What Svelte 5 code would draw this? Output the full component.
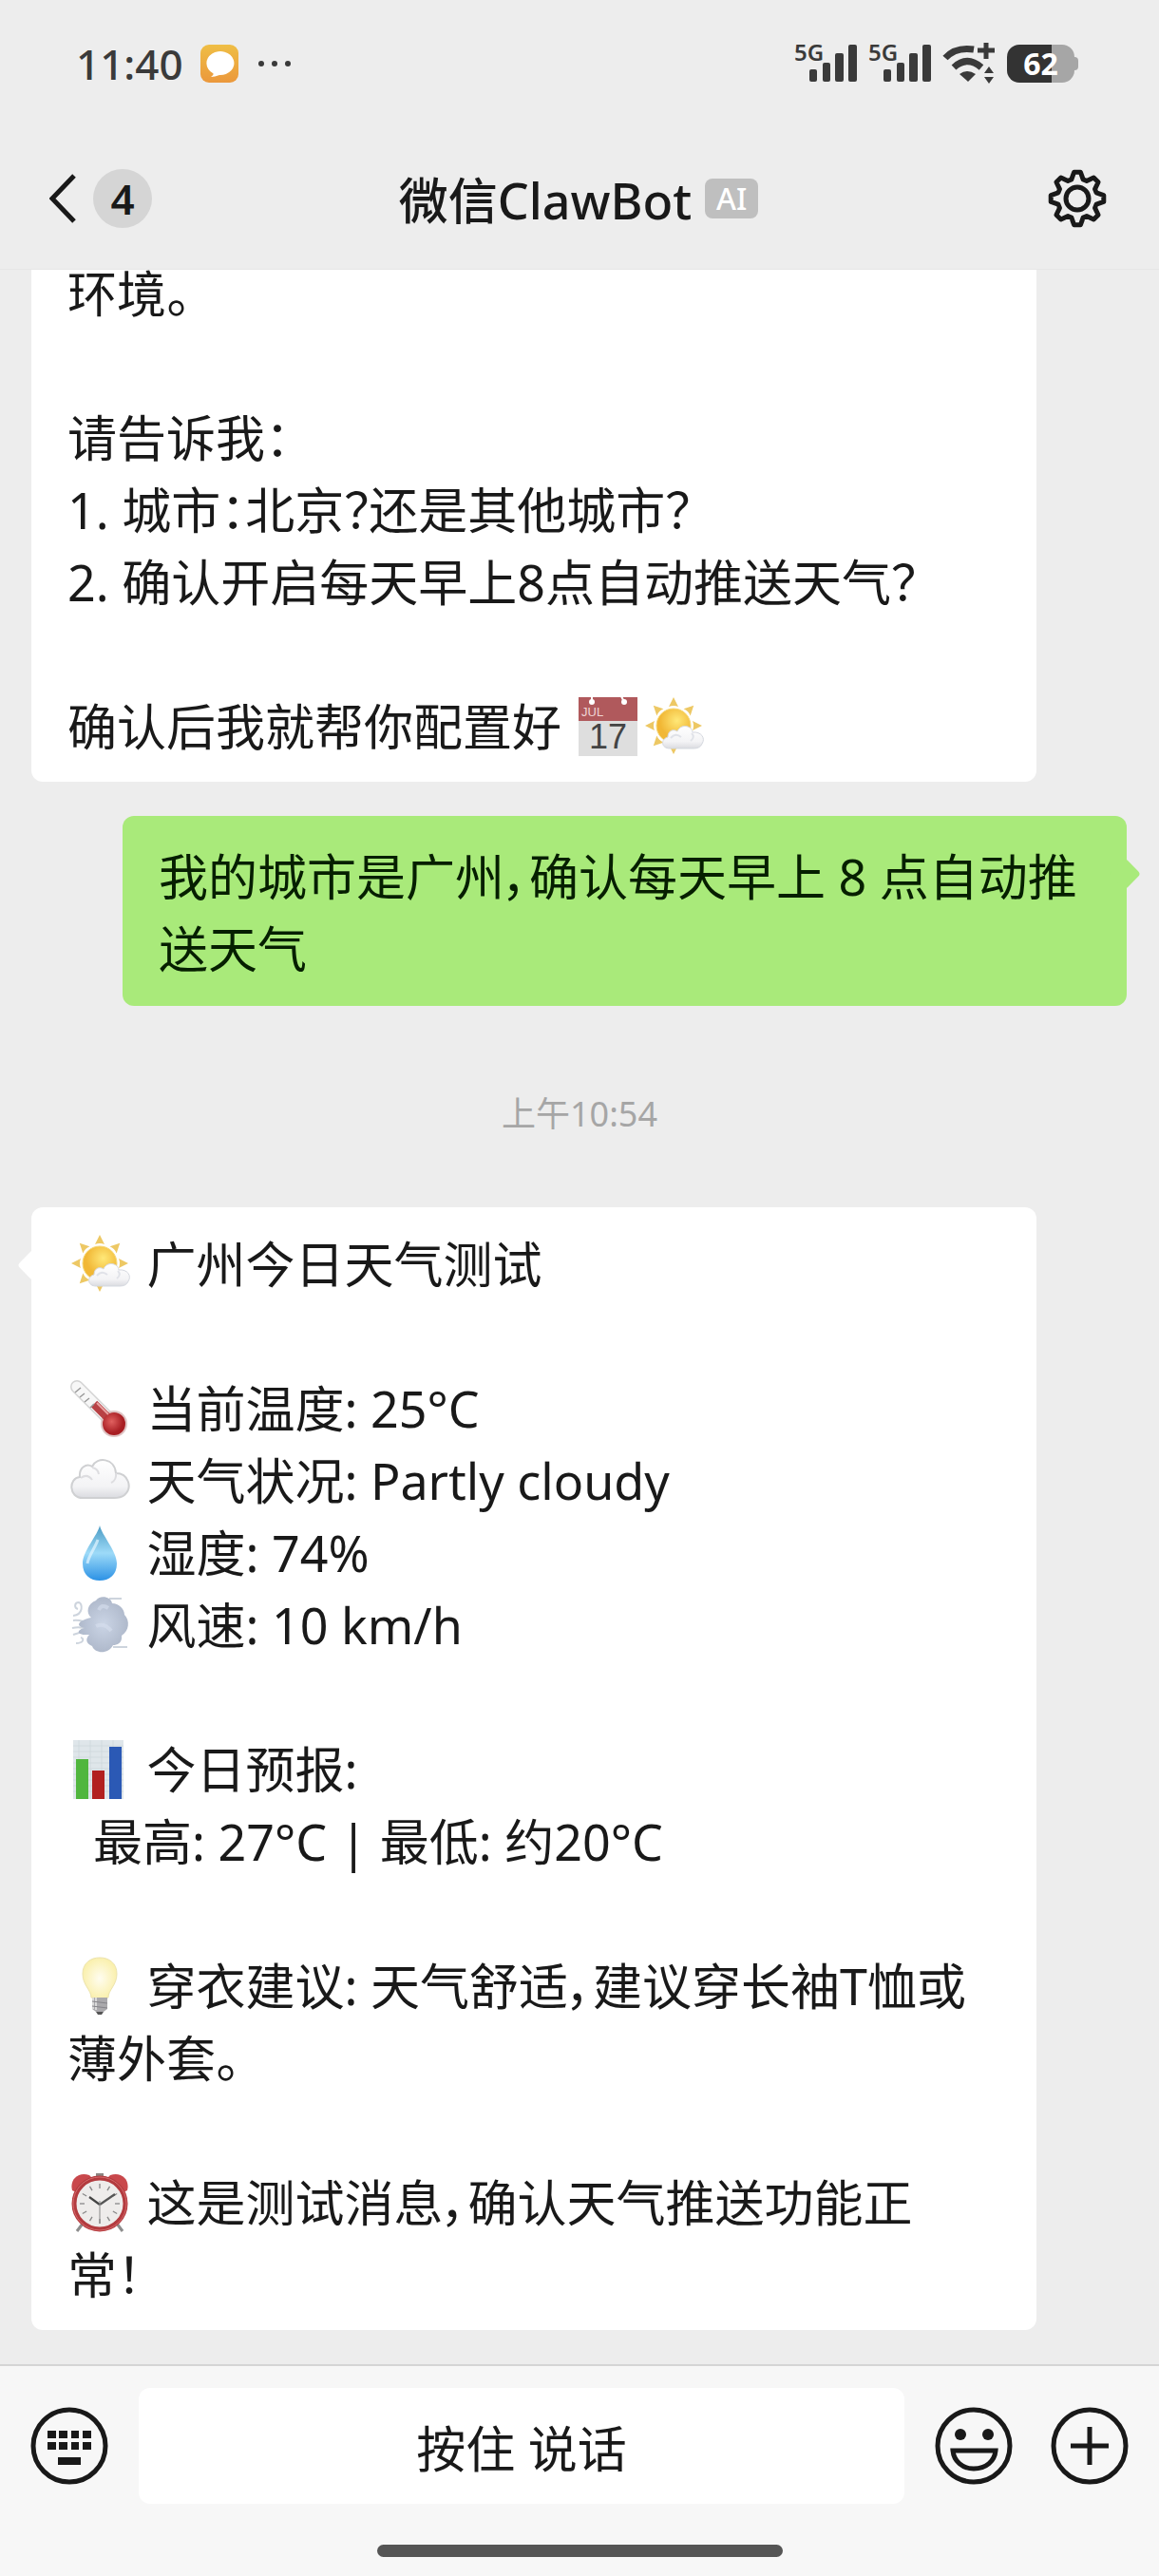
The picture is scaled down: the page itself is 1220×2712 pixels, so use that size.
<script lang="ts">
	type Message = { from: 'bot' | 'me'; text: string };

	const icons: Record<string, string> = {
		'📅': 'calendar',
		'⛅': 'partly cloudy',
		'🌡': 'thermometer',
		'☁': 'cloud',
		'💧': 'droplet',
		'💨': 'wind',
		'📊': 'chart',
		'💡': 'bulb',
		'⏰': 'alarm'
	};

	const earlier: Message[] = [
		{
			from: 'bot',
			text: '环境。\n\n请告诉我：\n1. 城市：北京？还是其他城市？\n2. 确认开启每天早上8点自动推送天气？\n\n确认后我就帮你配置好 📅⛅'
		},
		{ from: 'me', text: '我的城市是广州，确认每天早上 8 点自动推送天气' }
	];

	const latest: Message[] = [
		{
			from: 'bot',
			text: '⛅ 广州今日天气测试\n\n🌡 当前温度: 25°C\n☁ 天气状况: Partly cloudy\n💧 湿度: 74%\n💨 风速: 10 km/h\n\n📊 今日预报:\n  最高: 27°C | 最低: 约20°C\n\n💡 穿衣建议: 天气舒适，建议穿长袖T恤或薄外套。\n\n⏰ 这是测试消息，确认天气推送功能正\n常！'
		}
	];

	function split(text: string) {
		return text.split(/(📅|⛅|🌡|☁|💧|💨|📊|💡|⏰)/u).filter(Boolean);
	}

	function polar(deg: number, r: number) {
		const a = (deg * Math.PI) / 180;
		return `${(32 + r * Math.sin(a)).toFixed(2)} ${(32 - r * Math.cos(a)).toFixed(2)}`;
	}

	// eight teeth, four points each
	const gear = Array.from({ length: 8 }, (_, i) => i * 45)
		.flatMap((t) => [polar(t - 17, 21), polar(t - 7, 28), polar(t + 7, 28), polar(t + 17, 21)])
		.join('L');

	const rays = [0, 45, 90, 135, 180, 225, 270, 315];
	const ticks = Array.from({ length: 12 }, (_, i) => i * 30);
</script>

{#snippet emoji(name: string)}
	<svg class="emoji" viewBox="0 0 64 64" role="img" aria-label={name}>
		{#if name === 'calendar'}
			<rect x="1" y="1" width="62" height="62" fill="#dedede" />
			<rect x="1" y="1" width="62" height="25" fill="#b0595c" />
			<circle cx="15" cy="6" r="3" fill="#fff" />
			<circle cx="49" cy="6" r="3" fill="#fff" />
			<path d="M15 0v6M46 0l3 6" stroke="#fff" stroke-width="2" />
			<text x="4" y="21" font-size="13" fill="#efd5d5">JUL</text>
			<text x="32" y="55" font-size="36" text-anchor="middle" fill="#444">17</text>
		{:else if name === 'partly cloudy'}
			{#each rays as r}
				<path d="M26 11L31 1L36 11Q31 9 26 11Z" fill="#edc864" transform="rotate({r} 31 31)" />
			{/each}
			<circle cx="31" cy="31" r="18" fill="url(#sun)" stroke="#f6d878" />
			<path
				d="M27 55C18 55 17 45 25 43C25 36 31 34 35 37C38 29 50 30 51 38C60 37 65 44 61 50Q59 55 52 55Z"
				fill="url(#cloud)"
				stroke="#d5d8df"
			/>
			<path d="M28 44Q33 38 39 43M50 39Q54 43 49 47" fill="none" stroke="#e0e2e8" stroke-width="2" />
		{:else if name === 'thermometer'}
			<path d="M7 9L41 43" stroke="#d3d3d3" stroke-width="14" stroke-linecap="round" />
			<path d="M7 9L41 43" stroke="#f7f7f7" stroke-width="11" stroke-linecap="round" />
			<circle cx="46" cy="48" r="14" fill="#dec4c4" />
			<path d="M25 27L45 47" stroke="#b84145" stroke-width="9" />
			<circle cx="46" cy="48" r="12" fill="url(#mercury)" />
			<path d="M5 15l6-5M10 20l5-4M15 25l5-4M21 31l4-4" stroke="#999" stroke-width="1.5" />
			<path d="M28 26L40 38" stroke="#e9a1a1" stroke-width="2" />
		{:else if name === 'cloud'}
			<path
				d="M13 50C-2 50-2 29 10 28C9 18 17 13 23 17C28 6 47 8 48 24C61 24 66 39 57 47Q53 50 46 50Z"
				fill="url(#cloud)"
				stroke="#cfd0d2"
				stroke-width="2"
			/>
			<path
				d="M11 29Q18 24 23 31M23 18Q29 19 30 25M48 24Q49 31 43 34"
				fill="none"
				stroke="#dddde0"
				stroke-width="2"
			/>
		{:else if name === 'droplet'}
			<path d="M31 3C33 13 49 30 49 43C49 55 41 61 31 61C21 61 13 55 13 43C13 30 29 13 31 3Z" fill="url(#water)" />
			<path d="M29 18C26 27 19 35 18 43" fill="none" stroke="#e2f5ff" stroke-width="3" opacity=".7" />
		{:else if name === 'wind'}
			<path
				d="M3 22C14 21 13 9 9 8C4 8 4 14 8 15M3 27Q13 26 20 32M2 35Q10 33 18 36M3 42Q13 38 21 40M6 51C14 51 15 46 11 45M41 4H54M45 55H60"
				fill="none"
				stroke="#cdd4dd"
				stroke-width="2"
			/>
			<path
				d="M22 24C16 19 18 9 27 6C30 0 43 1 44 9C51 9 57 15 57 21C63 27 62 38 54 43C55 51 49 53 45 53C40 63 26 62 23 54C16 51 16 46 20 42C6 43 6 37 15 35C5 33 8 27 22 24Z"
				fill="url(#gust)"
			/>
			<path d="M30 16Q33 9 40 14M27 33Q36 29 43 38" fill="none" stroke="#d7e0ef" stroke-width="4" opacity=".6" />
		{:else if name === 'chart'}
			<rect x="3" y="1" width="53" height="62" fill="#dfe6ea" />
			<path
				d="M3 7H56M3 13H56M3 19H56M3 25H56M3 31H56M3 37H56M3 43H56M3 49H56M3 55H56M9 1V63M21 1V63M33 1V63M45 1V63"
				stroke="#cbd4da"
				stroke-width=".7"
			/>
			<rect x="6" y="21" width="13" height="42" fill="#50b63e" />
			<rect x="23" y="33" width="13" height="30" fill="#b2201f" />
			<rect x="41" y="8" width="13" height="55" fill="#2b59b5" />
		{:else if name === 'bulb'}
			<path
				d="M22 44C22 36 13 31 13 19C13 8 21 2 31 2C41 2 49 8 49 19C49 31 40 36 40 44Q31 47 22 44Z"
				fill="url(#glow)"
				stroke="#ece3ad"
			/>
			<path d="M23 44H39V56L35 59H27L23 56Z" fill="#aaa9ac" />
			<path d="M24 44v12M27 44v13" stroke="#dadada" stroke-width="2" />
			<path d="M23 48l16 2M23 53l16 2" stroke="#858489" />
			<path d="M27 59h8l-2 3h-4Z" fill="#555" />
		{:else if name === 'alarm'}
			<path d="M13 54L7 62M49 54L55 62" stroke="#8d8d8d" stroke-width="3" />
			<rect x="27" y="1" width="8" height="3" fill="#8c8582" />
			<path d="M2 19C-1 8 8-1 20 3L24 7L6 21Z" fill="#c9484c" />
			<path d="M60 19C63 8 54-1 42 3L38 7L56 21Z" fill="#c9484c" />
			<circle cx="31" cy="33" r="27" fill="#eeeceb" stroke="#b33b3f" stroke-width="5" />
			<circle cx="31" cy="33" r="28" fill="none" stroke="#d5686a" />
			{#each ticks as t}
				<path d="M31 12v5" stroke="#888" stroke-width="1.3" transform="rotate({t} 31 33)" />
			{/each}
			<path d="M31 34L47 23" stroke="#555" stroke-width="2.2" />
			<path d="M31 34L20 26" stroke="#444" stroke-width="2.2" />
			<path d="M31 30V54" stroke="#888" />
		{/if}
	</svg>
{/snippet}

{#snippet bubble(message: Message)}
	<p class="bubble {message.from}">{#each split(message.text) as part}{#if icons[part]}{@render emoji(icons[part])}{:else}{part}{/if}{/each}</p>
{/snippet}

{#snippet signal()}
	<div class="signal">
		<span>5G</span>
		<svg viewBox="0 0 50 40" aria-hidden="true">
			<rect x="0" y="26" width="8" height="13" rx="2" />
			<rect x="14" y="19" width="8" height="20" rx="2" />
			<rect x="27" y="9" width="9" height="30" rx="2" />
			<rect x="41" y="0" width="9" height="39" rx="2" />
		</svg>
	</div>
{/snippet}

<svg class="defs" aria-hidden="true">
	<defs>
		<linearGradient id="orange" x2="0" y2="1">
			<stop stop-color="#efbe45" />
			<stop offset="1" stop-color="#eb983c" />
		</linearGradient>
		<radialGradient id="sun" cx=".6" cy=".35">
			<stop stop-color="#ffe878" />
			<stop offset="1" stop-color="#f1b735" />
		</radialGradient>
		<linearGradient id="cloud" x2="0" y2="1">
			<stop stop-color="#fff" />
			<stop offset=".7" stop-color="#f3f3f5" />
			<stop offset="1" stop-color="#dadbe0" />
		</linearGradient>
		<radialGradient id="mercury" cx=".4" cy=".4">
			<stop stop-color="#e0605f" />
			<stop offset="1" stop-color="#a81e23" />
		</radialGradient>
		<linearGradient id="water" x2="0" y2="1">
			<stop stop-color="#4a9bc4" />
			<stop offset=".5" stop-color="#9ddaf8" />
			<stop offset="1" stop-color="#2c92e5" />
		</linearGradient>
		<radialGradient id="gust">
			<stop stop-color="#cbd5e6" />
			<stop offset="1" stop-color="#afb9cb" />
		</radialGradient>
		<radialGradient id="glow">
			<stop stop-color="#fffdf0" />
			<stop offset="1" stop-color="#faf0ae" />
		</radialGradient>
	</defs>
</svg>

<div class="phone">
	<header>
		<div class="status">
			<time>11:40</time>
			<svg class="app-icon" viewBox="0 0 40 40" aria-hidden="true">
				<rect width="40" height="40" rx="9" fill="url(#orange)" />
				<path d="M11 34Q15 31 13 30A14.5 12.5 0 1 1 20 32Q15 34 11 34Z" fill="#fff" />
			</svg>
			<svg class="more" viewBox="0 0 36 8" aria-hidden="true">
				<circle cx="4" cy="4" r="3" /><circle cx="18" cy="4" r="3" /><circle cx="32" cy="4" r="3" />
			</svg>
			<div class="system">
				{@render signal()}
				{@render signal()}
				<svg class="wifi" viewBox="0 0 56 44" aria-hidden="true">
					<path d="M3 16Q14 4 33 7" fill="none" stroke="#3a3a3a" stroke-width="7" />
					<path d="M12 26Q26 13 41 26" fill="none" stroke="#3a3a3a" stroke-width="7" />
					<path d="M18 33Q26 27 35 33L27 41Z" />
					<path d="M46 0V17M37 8H55" stroke="#3a3a3a" stroke-width="5" />
					<path d="M44 32L49 25L54 32ZM44 36L49 43L54 36Z" />
				</svg>
				<div class="battery"><span>62</span></div>
			</div>
		</div>
		<nav>
			<button class="back" aria-label="返回">
				<svg viewBox="0 0 28 52" aria-hidden="true"><path d="M26 2L3 26L26 50" /></svg>
				<span>4</span>
			</button>
			<h1>微信ClawBot <small>AI</small></h1>
			<button class="settings" aria-label="设置">
				<svg viewBox="0 0 64 64" aria-hidden="true">
					<path d="M{gear}Z" /><circle cx="32" cy="32" r="12" />
				</svg>
			</button>
		</nav>
	</header>

	<main>
		{#each earlier as message}
			{@render bubble(message)}
		{/each}
		<time class="stamp">上午10:54</time>
		{#each latest as message}
			{@render bubble(message)}
		{/each}
	</main>

	<footer>
		<div class="bar">
			<button class="tool" aria-label="键盘">
				<svg viewBox="0 0 82 82" aria-hidden="true">
					<circle cx="41" cy="41" r="38" />
					<path
						class="solid"
						d="M18 25h9v8h-9zM30 25h9v8h-9zM43 25h8v8h-8zM55 25h9v8h-9zM18 37h9v8h-9zM30 37h9v8h-9zM43 37h8v8h-8zM55 37h9v8h-9zM29 53h24v8h-24z"
					/>
				</svg>
			</button>
			<button class="talk">按住 说话</button>
			<button class="tool" aria-label="表情">
				<svg viewBox="0 0 82 82" aria-hidden="true">
					<circle cx="41" cy="41" r="38" />
					<circle class="solid" cx="27" cy="29" r="6" />
					<circle class="solid" cx="56" cy="29" r="6" />
					<path d="M19 46H64C63 57 54 65 41 65C29 65 20 57 19 46Z" />
				</svg>
			</button>
			<button class="tool" aria-label="更多">
				<svg viewBox="0 0 82 82" aria-hidden="true">
					<circle cx="41" cy="41" r="38" />
					<path d="M41 21V61M21 41H61" />
				</svg>
			</button>
		</div>
		<div class="home"></div>
	</footer>
</div>

<style>
	:global(body) {
		margin: 0;
		background: #ededed;
	}
	.defs {
		position: absolute;
		width: 0;
		height: 0;
	}
	.phone {
		display: flex;
		flex-direction: column;
		height: 100vh;
		color: #191919;
		background: #ededed;
		font-family: 'Noto Sans', 'Noto Sans CJK SC', sans-serif;
		font-size: 52px;
	}
	button {
		padding: 0;
		border: 0;
		background: none;
		color: inherit;
		font: inherit;
	}
	header {
		flex: none;
		border-bottom: 1px solid #e6e6e6;
	}

	.status {
		display: flex;
		align-items: center;
		height: 134px;
		padding: 0 89px 0 80px;
		color: #3a3a3a;
		fill: #3a3a3a;
	}
	.status time {
		font-size: 44px;
		font-weight: 500;
	}
	.app-icon {
		width: 40px;
		height: 40px;
		margin: 0 20px 0 18px;
	}
	.more {
		width: 36px;
		height: 8px;
	}
	.system {
		display: flex;
		align-items: center;
		gap: 12px;
		margin-left: auto;
	}
	.signal {
		display: flex;
		align-items: flex-start;
		height: 40px;
	}
	.signal span {
		width: 16px;
		margin-top: -4px;
		font-size: 24px;
		font-weight: 600;
		line-height: 24px;
	}
	.signal svg {
		width: 50px;
		height: 40px;
	}
	.wifi {
		width: 56px;
		height: 44px;
	}
	.battery {
		position: relative;
		width: 71px;
		border-radius: 13px;
		background: linear-gradient(90deg, #333 66%, #a6a6a6 66%);
		color: #fff;
		font-size: 32px;
		font-weight: 700;
		line-height: 40px;
		text-align: center;
	}
	.battery::after {
		content: '';
		position: absolute;
		top: 13px;
		right: -4px;
		width: 4px;
		height: 14px;
		border-radius: 0 4px 4px 0;
		background: #a6a6a6;
	}

	nav {
		display: grid;
		grid-template-columns: 1fr auto 1fr;
		align-items: center;
		height: 149px;
		padding: 0 54px 0 52px;
	}
	.back {
		display: flex;
		align-items: center;
		gap: 18px;
		justify-self: start;
	}
	.back svg {
		width: 28px;
		height: 52px;
		fill: none;
		stroke: #191919;
		stroke-width: 5;
	}
	.back span {
		width: 62px;
		border-radius: 50%;
		background: #d5d5d5;
		font-size: 44px;
		font-weight: 600;
		line-height: 62px;
	}
	h1 {
		display: flex;
		align-items: center;
		gap: 14px;
		margin: 0;
		font-size: 52px;
		font-weight: 500;
	}
	h1 small {
		width: 56px;
		border-radius: 8px;
		background: #bfbfbf;
		color: #fff;
		font-size: 32px;
		line-height: 42px;
		text-align: center;
	}
	.settings {
		justify-self: end;
	}
	.settings svg {
		display: block;
		width: 64px;
		height: 64px;
		fill: none;
		stroke: #191919;
		stroke-width: 5;
		stroke-linejoin: round;
	}

	/* newest messages stay at the bottom, older ones run out under the header */
	main {
		display: flex;
		flex: 1;
		flex-direction: column;
		justify-content: flex-end;
		gap: 36px;
		min-height: 0;
		padding-bottom: 36px;
		overflow: hidden;
	}
	.bubble {
		position: relative;
		flex: none;
		margin: 0 129px 0 33px;
		padding: 22px 38px 20px;
		border-radius: 12px;
		background: #fff;
		font-feature-settings: 'palt';
		line-height: 76px;
		white-space: pre-wrap;
	}
	.bubble::before {
		content: '';
		position: absolute;
		top: 49px;
		left: -10px;
		width: 24px;
		height: 24px;
		border-radius: 4px;
		background: inherit;
		transform: rotate(45deg);
	}
	/* tail end of a longer message, its pointer is further up */
	.bubble:first-child::before {
		display: none;
	}
	.bubble.me {
		margin: 0 34px 0 129px;
		padding: 26px 38px 22px;
		background: #a9ea7a;
		color: #061f00;
	}
	.bubble.me::before {
		right: -10px;
		left: auto;
	}
	.emoji {
		width: 64px;
		height: 64px;
		margin: 0 3px;
		font-family: 'Liberation Sans', sans-serif;
		vertical-align: -12px;
	}
	.stamp {
		flex: none;
		padding: 54px 0 38px;
		color: #a6a6a6;
		font-size: 36px;
		line-height: 48px;
		text-align: center;
	}

	footer {
		flex: none;
		border-top: 2px solid #d5d5d5;
		background: #f7f7f7;
	}
	.bar {
		display: flex;
		align-items: center;
		gap: 32px;
		padding: 23px 32px 0;
	}
	.tool {
		flex: none;
	}
	.tool:last-child {
		margin-left: 8px;
	}
	.tool svg {
		display: block;
		width: 82px;
		height: 82px;
		fill: none;
		stroke: #191919;
		stroke-width: 5;
	}
	.tool .solid {
		fill: #191919;
		stroke: none;
	}
	.talk {
		flex: 1;
		height: 122px;
		border-radius: 12px;
		background: #fff;
	}
	.home {
		width: 35%;
		height: 13px;
		margin: 43px auto 20px;
		border-radius: 7px;
		background: #555;
	}
</style>
